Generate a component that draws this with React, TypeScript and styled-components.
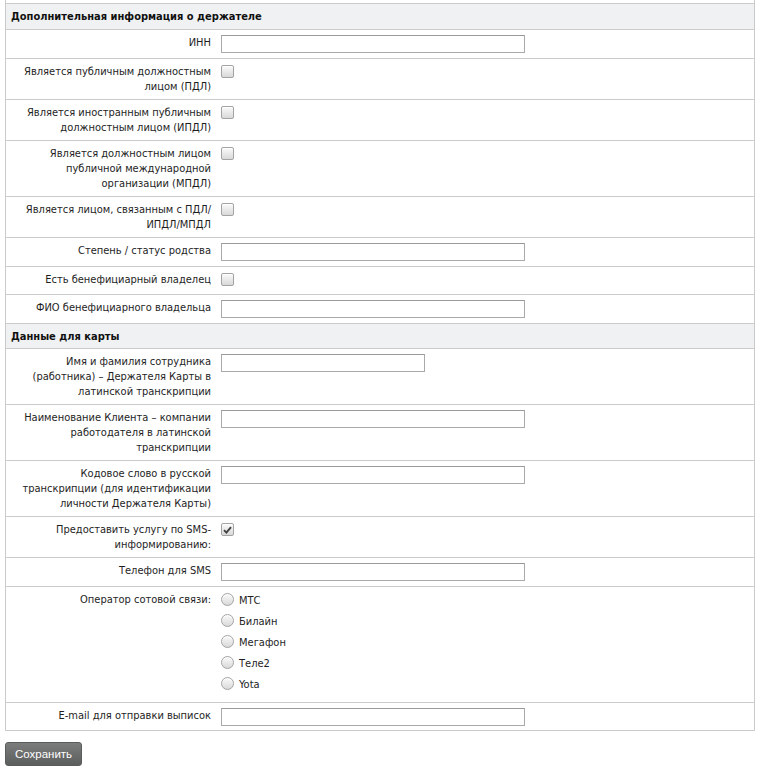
import React from "react";
import styled, { createGlobalStyle } from "styled-components";

const Global = createGlobalStyle`
  html, body { margin: 0; padding: 0; background: #fff; }
  body {
    font-family: Tahoma, "DejaVu Sans Condensed", "DejaVu Sans", Verdana, sans-serif;
    font-stretch: semi-condensed;
    font-size: 11px;
    color: #1e1e1e;
  }
`;

const Page = styled.div`
  padding: 0 7px 0 5px;
`;

const Table = styled.div`
  border-left: 1px solid #cbcbcb;
  border-right: 1px solid #cbcbcb;
  border-bottom: 1px solid #cbcbcb;
`;

const Stub = styled.div`
  height: 3px;
  border-bottom: 1px solid #cbcbcb;
`;

const SectionHeader = styled.div<{ $tight?: boolean }>`
  background: #f0f1f3;
  font-weight: bold;
  line-height: 15px;
  padding: 5px 5px ${(p) => (p.$tight ? "4px" : "5px")};
  border-bottom: 1px solid #cbcbcb;
  color: #111;
  white-space: nowrap;
`;

const Row = styled.div<{ $last?: boolean }>`
  display: grid;
  grid-template-columns: 210px 1fr;
  border-bottom: ${(p) => (p.$last ? "none" : "1px solid #cbcbcb")};
  & > div {
    padding-bottom: ${(p) => (p.$last ? "4px" : "5px")};
  }
`;

const LabelCell = styled.div`
  padding: 5px;
  text-align: right;
  line-height: 15px;
  color: #1e1e1e;
  white-space: nowrap;
`;

const FieldCell = styled.div`
  padding: 5px;
  display: flex;
  flex-direction: column;
  align-items: flex-start;
`;

const TextInput = styled.input<{ $w: number }>`
  box-sizing: border-box;
  width: ${(p) => p.$w}px;
  height: 18px;
  margin: 0;
  padding: 0 3px;
  border: 1px solid #a9a9a9;
  border-top-color: #9a9a9a;
  background: #fff;
  font: inherit;
  outline: none;
`;

const Box = styled.span<{ $round?: boolean }>`
  box-sizing: border-box;
  display: inline-flex;
  align-items: center;
  justify-content: center;
  width: 13px;
  height: 13px;
  border: 1px solid #a3a3a3;
  border-radius: ${(p) => (p.$round ? "50%" : "2px")};
  background: linear-gradient(#fafafa, #d9d9d9);
  box-shadow: inset 0 1px 0 #fff;
  flex: none;
`;

const CheckWrap = styled.div`
  margin: 1px 0 3px;
  height: 13px;
`;

const RadioList = styled.div`
  display: flex;
  flex-direction: column;
`;

const RadioItem = styled.label`
  display: flex;
  align-items: flex-start;
  height: 21px;
  gap: 5px;
  line-height: 15px;
  color: #1e1e1e;
  & > span:first-child {
    margin-top: 1px;
  }
`;

const RadioText = styled.span`
  margin-top: 1px;
`;

const SaveButton = styled.button`
  margin-top: 11px;
  width: 77px;
  height: 24px;
  border: 1px solid #5a5b5b;
  border-radius: 3px;
  background: linear-gradient(#7b7c7c, #5c5d5d);
  color: #fff;
  font-family: "Liberation Sans", Arial, sans-serif;
  font-size: 11.5px;
  padding: 0 0 1px;
  cursor: pointer;
`;

const Checkbox = ({ checked }: { checked?: boolean }) => (
  <CheckWrap>
    <Box>
      {checked && (
        <svg width="9" height="8" viewBox="0 0 9 8">
          <path d="M1 4.2 L3.4 6.6 L8 1.2" fill="none" stroke="#404040" strokeWidth="1.9" />
        </svg>
      )}
    </Box>
  </CheckWrap>
);

type Field =
  | { kind: "text"; w?: number }
  | { kind: "check"; checked?: boolean }
  | { kind: "radio"; options: string[] };

type Item = { label: string[]; field: Field };

const section1: Item[] = [
  { label: ["ИНН"], field: { kind: "text" } },
  { label: ["Является публичным должностным", "лицом (ПДЛ)"], field: { kind: "check" } },
  { label: ["Является иностранным публичным", "должностным лицом (ИПДЛ)"], field: { kind: "check" } },
  {
    label: ["Является должностным лицом", "публичной международной", "организации (МПДЛ)"],
    field: { kind: "check" },
  },
  { label: ["Является лицом, связанным с ПДЛ/", "ИПДЛ/МПДЛ"], field: { kind: "check" } },
  { label: ["Степень / статус родства"], field: { kind: "text" } },
  { label: ["Есть бенефициарный владелец"], field: { kind: "check" } },
  { label: ["ФИО бенефициарного владельца"], field: { kind: "text" } },
];

const section2: Item[] = [
  {
    label: ["Имя и фамилия сотрудника", "(работника) – Держателя Карты в", "латинской транскрипции"],
    field: { kind: "text", w: 204 },
  },
  {
    label: ["Наименование Клиента – компании", "работодателя в латинской", "транскрипции"],
    field: { kind: "text" },
  },
  {
    label: ["Кодовое слово в русской", "транскрипции (для идентификации", "личности Держателя Карты)"],
    field: { kind: "text" },
  },
  { label: ["Предоставить услугу по SMS-", "информированию:"], field: { kind: "check", checked: true } },
  { label: ["Телефон для SMS"], field: { kind: "text" } },
  {
    label: ["Оператор сотовой связи:"],
    field: { kind: "radio", options: ["МТС", "Билайн", "Мегафон", "Теле2", "Yota"] },
  },
  { label: ["E-mail для отправки выписок"], field: { kind: "text" } },
];

const renderField = (f: Field) => {
  if (f.kind === "text") return <TextInput type="text" $w={f.w ?? 304} />;
  if (f.kind === "check") return <Checkbox checked={f.checked} />;
  return (
    <RadioList>
      {f.options.map((o) => (
        <RadioItem key={o}>
          <Box $round />
          <RadioText>{o}</RadioText>
        </RadioItem>
      ))}
    </RadioList>
  );
};

const FormRow = ({ item, last }: { item: Item; last?: boolean }) => (
  <Row $last={last}>
    <LabelCell>
      {item.label.map((l, i) => (
        <React.Fragment key={i}>
          {i > 0 && <br />}
          {l}
        </React.Fragment>
      ))}
    </LabelCell>
    <FieldCell>{renderField(item.field)}</FieldCell>
  </Row>
);

export default function App() {
  return (
    <Page>
      <Global />
      <Table>
        <Stub />
        <SectionHeader>Дополнительная информация о держателе</SectionHeader>
        {section1.map((it, i) => (
          <FormRow key={i} item={it} />
        ))}
        <SectionHeader $tight>Данные для карты</SectionHeader>
        {section2.map((it, i) => (
          <FormRow key={i} item={it} last={i === section2.length - 1} />
        ))}
      </Table>
      <SaveButton type="button">Сохранить</SaveButton>
    </Page>
  );
}
